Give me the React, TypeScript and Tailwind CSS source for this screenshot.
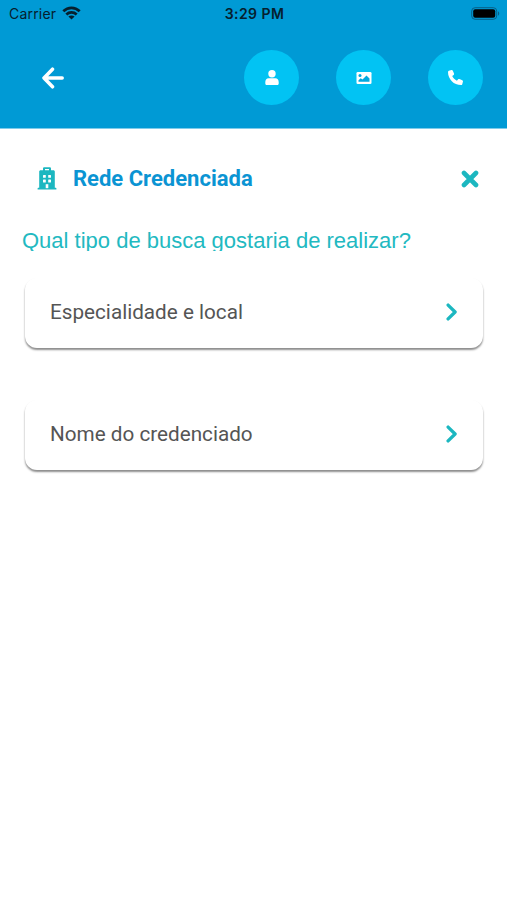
import type { ReactNode } from 'react';

function WifiIcon() {
  return (
    <svg className="h-[14px] w-[19px]" viewBox="0 0 19 14" fill="none" stroke="#06202e" strokeWidth="2.7">
      <path d="M1.3 5.3C6 .7 13 .7 17.7 5.3" />
      <path d="M4.3 8.5c3-2.8 7.4-2.8 10.4 0" />
      <path d="M9.5 13.6 6.4 10.6c1.7-1.6 4.5-1.6 6.2 0Z" fill="#06202e" stroke="none" />
    </svg>
  );
}

function BatteryIcon() {
  return (
    <svg className="h-[13px] w-[29px]" viewBox="0 0 29 13">
      <rect x=".7" y=".7" width="25" height="11.6" rx="3.4" fill="none" stroke="#075f87" strokeWidth="1" />
      <rect x="2.2" y="2.2" width="22" height="8.6" rx="2" fill="#000" />
      <path d="M27 4.3c1.7.7 1.7 3.7 0 4.4Z" fill="#075f87" />
    </svg>
  );
}

function ArrowLeftIcon() {
  return (
    <svg className="h-[22px] w-[24px]" viewBox="0 0 24 22" fill="none" stroke="#fff" strokeWidth="3.5" strokeLinecap="round" strokeLinejoin="round">
      <path d="M11.5 2.2 3 11l8.5 8.8M3.5 11h17.700" />
    </svg>
  );
}

function CloseIcon() {
  return (
    <svg className="size-[18px]" viewBox="0 0 18 18" fill="none" stroke="#1cb7c0" strokeWidth="4.6" strokeLinecap="round">
      <path d="m3 3 12 12M15 3 3 15" />
    </svg>
  );
}

function ChevronIcon() {
  return (
    <svg className="h-[18px] w-[12px]" viewBox="0 0 12 18" fill="none" stroke="#1cb7c0" strokeWidth="3.3" strokeLinecap="round" strokeLinejoin="round">
      <path d="m2.1 2.1 7 6.9-7 6.9" />
    </svg>
  );
}

function UserIcon() {
  return (
    <svg className="h-[15px] w-[14px]" viewBox="0 0 14 15" fill="#fff">
      <circle cx="7" cy="3.7" r="3.7" />
      <path d="M3.6 8.2h6.8c1.9 0 3.3 1.7 3.3 3.8v1.5c0 .8-.5 1.5-1.3 1.5H1.6C.8 15 .3 14.3.3 13.5V12c0-2.1 1.4-3.8 3.3-3.8Z" />
    </svg>
  );
}

function ImageIcon() {
  return (
    <svg className="h-[12px] w-[16px]" viewBox="0 0 16 12">
      <rect x=".5" width="15" height="12" rx="1.3" fill="#fff" />
      <circle cx="4" cy="3.6" r="1.5" fill="#02a9df" />
      <path d="M2.5 9.8V8.3l2.2-2L6.5 7.5l4-3.9 3 3v3.2Z" fill="#02a9df" />
    </svg>
  );
}

function PhoneIcon() {
  return (
    <svg className="h-[15px] w-[15px]" viewBox="0 0 512 512" fill="#fff">
      <path d="M164.9 24.6c-7.7-18.6-28-28.5-47.4-23.2l-88 24C12.1 30.2 0 46 0 64c0 247.4 200.6 448 448 448 18 0 33.8-12.1 38.6-29.5l24-88c5.3-19.4-4.6-39.7-23.2-47.4l-96-40c-16.3-6.8-35.2-2.1-46.3 11.6L304.7 368C234.3 334.7 177.3 277.7 144 207.3L193.3 167c13.7-11.2 18.4-30 11.6-46.3l-40-96Z" />
    </svg>
  );
}

function BuildingIcon() {
  return (
    <svg className="h-[23px] w-[20px]" viewBox="0 0 20 23">
      <path
        fill="#1cb7c0"
        fillRule="evenodd"
        d="M6 3.2V1.5C6 .7 6.6.2 7.4.2h5.2c.8 0 1.4.5 1.4 1.3v1.7h2.3c.9 0 1.5.6 1.5 1.4V20.8h1c.4 0 .6.2.6.6v1H.6v-1c0-.4.2-.6.6-.6h1V4.6c0-.8.6-1.4 1.500-1.400ZM8 2v1.200h4V2Z"
      />
      <g fill="#fff">
        <rect x="6" y="8" width="2.8" height="2.8" rx=".5" />
        <rect x="11.2" y="8" width="2.8" height="2.8" rx=".5" />
        <rect x="6" y="12.6" width="2.8" height="2.8" rx=".5" />
        <rect x="11.2" y="12.6" width="2.8" height="2.8" rx=".5" />
        <rect x="8.7" y="17.2" width="2.6" height="4" />
      </g>
    </svg>
  );
}

function RoundButton({ label, children }: { label: string; children: ReactNode }) {
  return (
    <button aria-label={label} className="flex size-[55px] items-center justify-center rounded-full bg-[#02c3f3]">
      {children}
    </button>
  );
}

function OptionCard({ label }: { label: string }) {
  return (
    <button className="flex h-[70px] w-full items-center justify-between rounded-xl bg-white pr-[25px] pb-[3px] pl-[25px] text-left shadow-[0_2px_2px_rgba(0,0,0,0.45)]">
      <span className="text-[20.7px] leading-6 whitespace-nowrap text-[#555]">{label}</span>
      <ChevronIcon />
    </button>
  );
}

export default function App() {
  return (
    <div className="h-[900px] w-[507px] overflow-hidden bg-white font-['Roboto',sans-serif]">
      <header className="h-[129px] border-b border-[#7fcbea] bg-[#009ad5]">
        <div className="grid h-[26px] grid-cols-3 items-center pr-[7px] pl-[9px] font-['Inter',sans-serif] text-[#06202e]">
          <div className="flex items-center gap-[6px]">
            <span className="text-[14px] tracking-[0.2px]">Carrier</span>
            <WifiIcon />
          </div>
          <span className="text-center text-[14px] font-semibold tracking-[0.45px]">3:29 PM</span>
          <div className="flex justify-end">
            <BatteryIcon />
          </div>
        </div>
        <div className="mt-[24px] flex h-[55px] items-center justify-between pr-[24px] pl-[41px]">
          <button aria-label="Voltar">
            <ArrowLeftIcon />
          </button>
          <nav className="flex gap-[37px]">
            <RoundButton label="Perfil"><UserIcon /></RoundButton>
            <RoundButton label="Imagem"><ImageIcon /></RoundButton>
            <RoundButton label="Telefone"><PhoneIcon /></RoundButton>
          </nav>
        </div>
      </header>
      <main>
        <div className="mt-[38px] flex h-6 items-center pr-[28px] pl-[37px]">
          <div className="-mt-[2px]">
            <BuildingIcon />
          </div>
          <h1 className="ml-4 text-[22px] leading-6 font-bold text-[#0b94d3]">Rede Credenciada</h1>
          <div className="ml-auto">
            <CloseIcon />
          </div>
        </div>
        <p className="mt-[37px] ml-[22px] h-[23px] overflow-hidden font-['Liberation_Sans',Arial,sans-serif] text-[22px] leading-[25px] whitespace-nowrap text-[#22b9c1]">
          Qual tipo de busca gostaria de realizar?
        </p>
        <div className="mt-[27px] flex flex-col gap-[52px] pr-[24px] pl-[25px]">
          <OptionCard label="Especialidade e local" />
          <OptionCard label="Nome do credenciado" />
        </div>
      </main>
    </div>
  );
}
